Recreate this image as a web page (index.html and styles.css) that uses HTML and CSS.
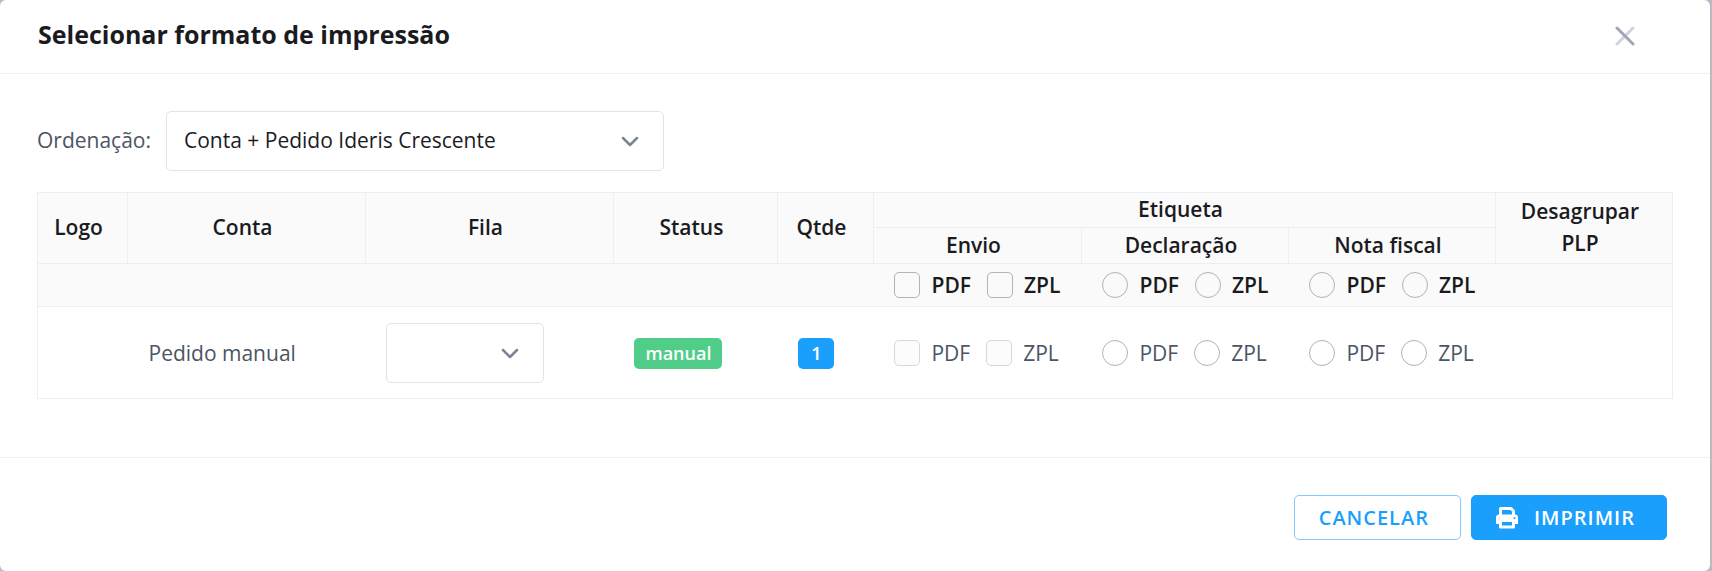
FILE: index.html
```html
<!DOCTYPE html>
<html lang="pt-BR">

<head>
    <meta charset="UTF-8">
    <meta name="viewport" content="width=device-width, initial-scale=1.0">
    <title>Selecionar formato de impressão</title>
    <link rel="stylesheet" href="styles.css">
</head>

<body>
    <form class="modal">
        <header class="modal-header">
            <h1>Selecionar formato de impressão</h1>
            <button type="button" class="close" aria-label="Fechar">
                <svg width="20" height="20" viewBox="0 0 20 20" fill="none" stroke-width="3" stroke-linecap="round">
                    <path d="M18 2L2 18" stroke="#d0d2dd" />
                    <path d="M2 2l16 16" stroke="#a1a5b7" />
                </svg>
            </button>
        </header>

        <div class="modal-body">
            <div class="order">
                <label for="ordenacao">Ordenação:</label>
                <div class="selectBox order-select">
                    <select id="ordenacao">
                        <option>Conta + Pedido Ideris Crescente</option>
                    </select>
                    <svg width="18" height="12" viewBox="0 0 18 12"><path d="M2 2l7 7 7-7" /></svg>
                </div>
            </div>

            <table>
                <colgroup>
                    <col class="col-logo">
                    <col class="col-conta">
                    <col class="col-fila">
                    <col class="col-status">
                    <col class="col-qtde">
                    <col class="col-envio">
                    <col class="col-format">
                    <col class="col-format">
                    <col class="col-plp">
                </colgroup>
                <thead>
                    <tr>
                        <th rowspan="2">Logo</th>
                        <th rowspan="2">Conta</th>
                        <th rowspan="2">Fila</th>
                        <th rowspan="2">Status</th>
                        <th rowspan="2">Qtde</th>
                        <th colspan="3">Etiqueta</th>
                        <th rowspan="2">Desagrupar PLP</th>
                    </tr>
                    <tr class="types">
                        <th>Envio</th>
                        <th>Declaração</th>
                        <th>Nota fiscal</th>
                    </tr>
                    <tr class="all">
                        <td colspan="5"></td>
                        <td>
                            <div class="options">
                                <label><input type="checkbox" name="envioTodos" value="pdf">PDF</label>
                                <label><input type="checkbox" name="envioTodos" value="zpl">ZPL</label>
                            </div>
                        </td>
                        <td>
                            <div class="options">
                                <label><input type="radio" name="declaracaoTodos" value="pdf">PDF</label>
                                <label><input type="radio" name="declaracaoTodos" value="zpl">ZPL</label>
                            </div>
                        </td>
                        <td>
                            <div class="options">
                                <label><input type="radio" name="notaTodos" value="pdf">PDF</label>
                                <label><input type="radio" name="notaTodos" value="zpl">ZPL</label>
                            </div>
                        </td>
                        <td></td>
                    </tr>
                </thead>
                <tbody>
                    <tr>
                        <td></td>
                        <td>Pedido manual</td>
                        <td>
                            <div class="selectBox fila-select">
                                <select aria-label="Fila">
                                    <option></option>
                                </select>
                                <svg width="18" height="12" viewBox="0 0 18 12"><path d="M2 2l7 7 7-7" /></svg>
                            </div>
                        </td>
                        <td><span class="badge badge-success">manual</span></td>
                        <td><span class="badge badge-primary">1</span></td>
                        <td>
                            <div class="options">
                                <label><input type="checkbox" name="envio" value="pdf" disabled>PDF</label>
                                <label><input type="checkbox" name="envio" value="zpl" disabled>ZPL</label>
                            </div>
                        </td>
                        <td>
                            <div class="options">
                                <label><input type="radio" name="declaracao" value="pdf">PDF</label>
                                <label><input type="radio" name="declaracao" value="zpl">ZPL</label>
                            </div>
                        </td>
                        <td>
                            <div class="options">
                                <label><input type="radio" name="nota" value="pdf">PDF</label>
                                <label><input type="radio" name="nota" value="zpl">ZPL</label>
                            </div>
                        </td>
                        <td></td>
                    </tr>
                </tbody>
            </table>
        </div>

        <footer class="modal-footer">
            <button type="button" class="btn btn-outline">CANCELAR</button>
            <button type="submit" class="btn btn-primary">
                <svg width="22" height="22" viewBox="0 0 22 22" fill="none" stroke="#fff" stroke-width="3" stroke-linejoin="round">
                    <path d="M4.500 8V1.500H15l2.500 2.500V8" />
                    <path d="M3 7.500h16a3 3 0 0 1 3 3V17h-3.500v-3.500h-15V17H0v-6.500a3 3 0 0 1 3-3z" fill="#fff" stroke="none" />
                    <path d="M4.500 13.500h13v6.500h-13z" fill="#1b9ffc" />
                    <circle cx="18.500" cy="11" r="1" fill="#1b9ffc" stroke="none" />
                </svg>
                IMPRIMIR
            </button>
        </footer>
    </form>
</body>

</html>
```

FILE: styles.css
```css
* {
    box-sizing: border-box;
}
body {
    margin: 0;
    padding-right: 2px;
    background: #b8bcc2;
    color: #4b5563;
    font-family: "Open Sans", "Noto Sans", sans-serif;
    font-size: 21px;
    line-height: 32px;
}
.modal {
    background: #fff;
    border-radius: 6px;
}
.modal-header {
    display: flex;
    justify-content: space-between;
    align-items: center;
    height: 74px;
    padding: 0 72px 2px 38px;
    border-bottom: 1px solid #eeeff1;
}
h1 {
    margin: 0;
    padding-bottom: 3px;
    color: #1b1b1f;
    font-size: 25px;
    font-weight: 700;
}
.close {
    display: flex;
    padding: 3px;
    border: none;
    background: none;
    cursor: pointer;
}

.modal-body {
    padding: 37px 37px 58px;
}
.order {
    display: flex;
    align-items: center;
    gap: 15px;
    margin-bottom: 21px;
}
.order label {
    padding-bottom: 2px;
}
.selectBox {
    position: relative;
}
.order-select {
    width: 498px;
}
.fila-select {
    width: 158px;
}
.selectBox select {
    display: block;
    width: 100%;
    height: 60px;
    padding: 0 50px 2px 17px;
    border: 1px solid #e2e3e5;
    border-radius: 5px;
    background: #fff;
    color: #1b1b1f;
    font: inherit;
    font-weight: 500;
    appearance: none;
}
.selectBox svg {
    position: absolute;
    top: 25px;
    right: 25px;
    fill: none;
    stroke: #7e8299;
    stroke-width: 2.5;
    stroke-linecap: round;
    stroke-linejoin: round;
    pointer-events: none;
}

table {
    width: 100%;
    table-layout: fixed;
    border-collapse: collapse;
    border: 1px solid #ebeff3;
}
.col-logo {
    width: 90px;
}
.col-fila {
    width: 248px;
}
.col-status {
    width: 164px;
}
.col-qtde {
    width: 96px;
}
.col-envio {
    width: 208px;
}
.col-format {
    width: 207px;
}
.col-plp {
    width: 177px;
}
thead {
    background: #fafafa;
    color: #1b1b1f;
}
th {
    padding: 0 18px 2px 10px;
    border: 1px solid #ebeff3;
    font-weight: 600;
}
.types th {
    padding-top: 1px;
}
td {
    height: 92px;
    padding: 0 21px;
    border-bottom: 1px solid #ebeff3;
    text-align: left;
}
.all td {
    height: 43px;
    font-weight: 600;
}
.options {
    display: flex;
    gap: 16px;
}
.options label {
    display: flex;
    align-items: center;
    gap: 11px;
}
.options input {
    width: 26px;
    height: 26px;
    margin: 0;
    border: 1px solid #b3b3b3;
    border-radius: 5px;
    background: #fff;
    appearance: none;
}
.all input {
    background: #fafafa;
}
.options input[type="radio"] {
    border-radius: 50%;
}
.options input:disabled {
    border-color: #d8d8d8;
    background: #fcfcfc;
}
.options input:checked {
    border-color: #1b9ffc;
    background: #1b9ffc;
}
.badge {
    display: inline-block;
    min-width: 36px;
    padding: 0 11px;
    border-radius: 5px;
    color: #fff;
    font-size: 18px;
    font-weight: 600;
    line-height: 31px;
    text-align: center;
}
.badge-success {
    background: #50cd89;
}
.badge-primary {
    background: #1b9ffc;
}

.modal-footer {
    display: flex;
    justify-content: flex-end;
    gap: 10px;
    padding: 37px 43px 31px;
    border-top: 1px solid #eeeff1;
}
.btn {
    display: flex;
    align-items: center;
    gap: 16px;
    height: 45px;
    padding: 0 31px 0 24px;
    border: 1px solid #1b9ffc;
    border-radius: 5px;
    font-family: inherit;
    font-size: 20px;
    font-weight: 600;
    letter-spacing: 1px;
    cursor: pointer;
}
.btn-outline {
    border-color: #84caff;
    background: #fff;
    color: #1b9ffc;
}
.btn-primary {
    background: #1b9ffc;
    color: #fff;
}
```
